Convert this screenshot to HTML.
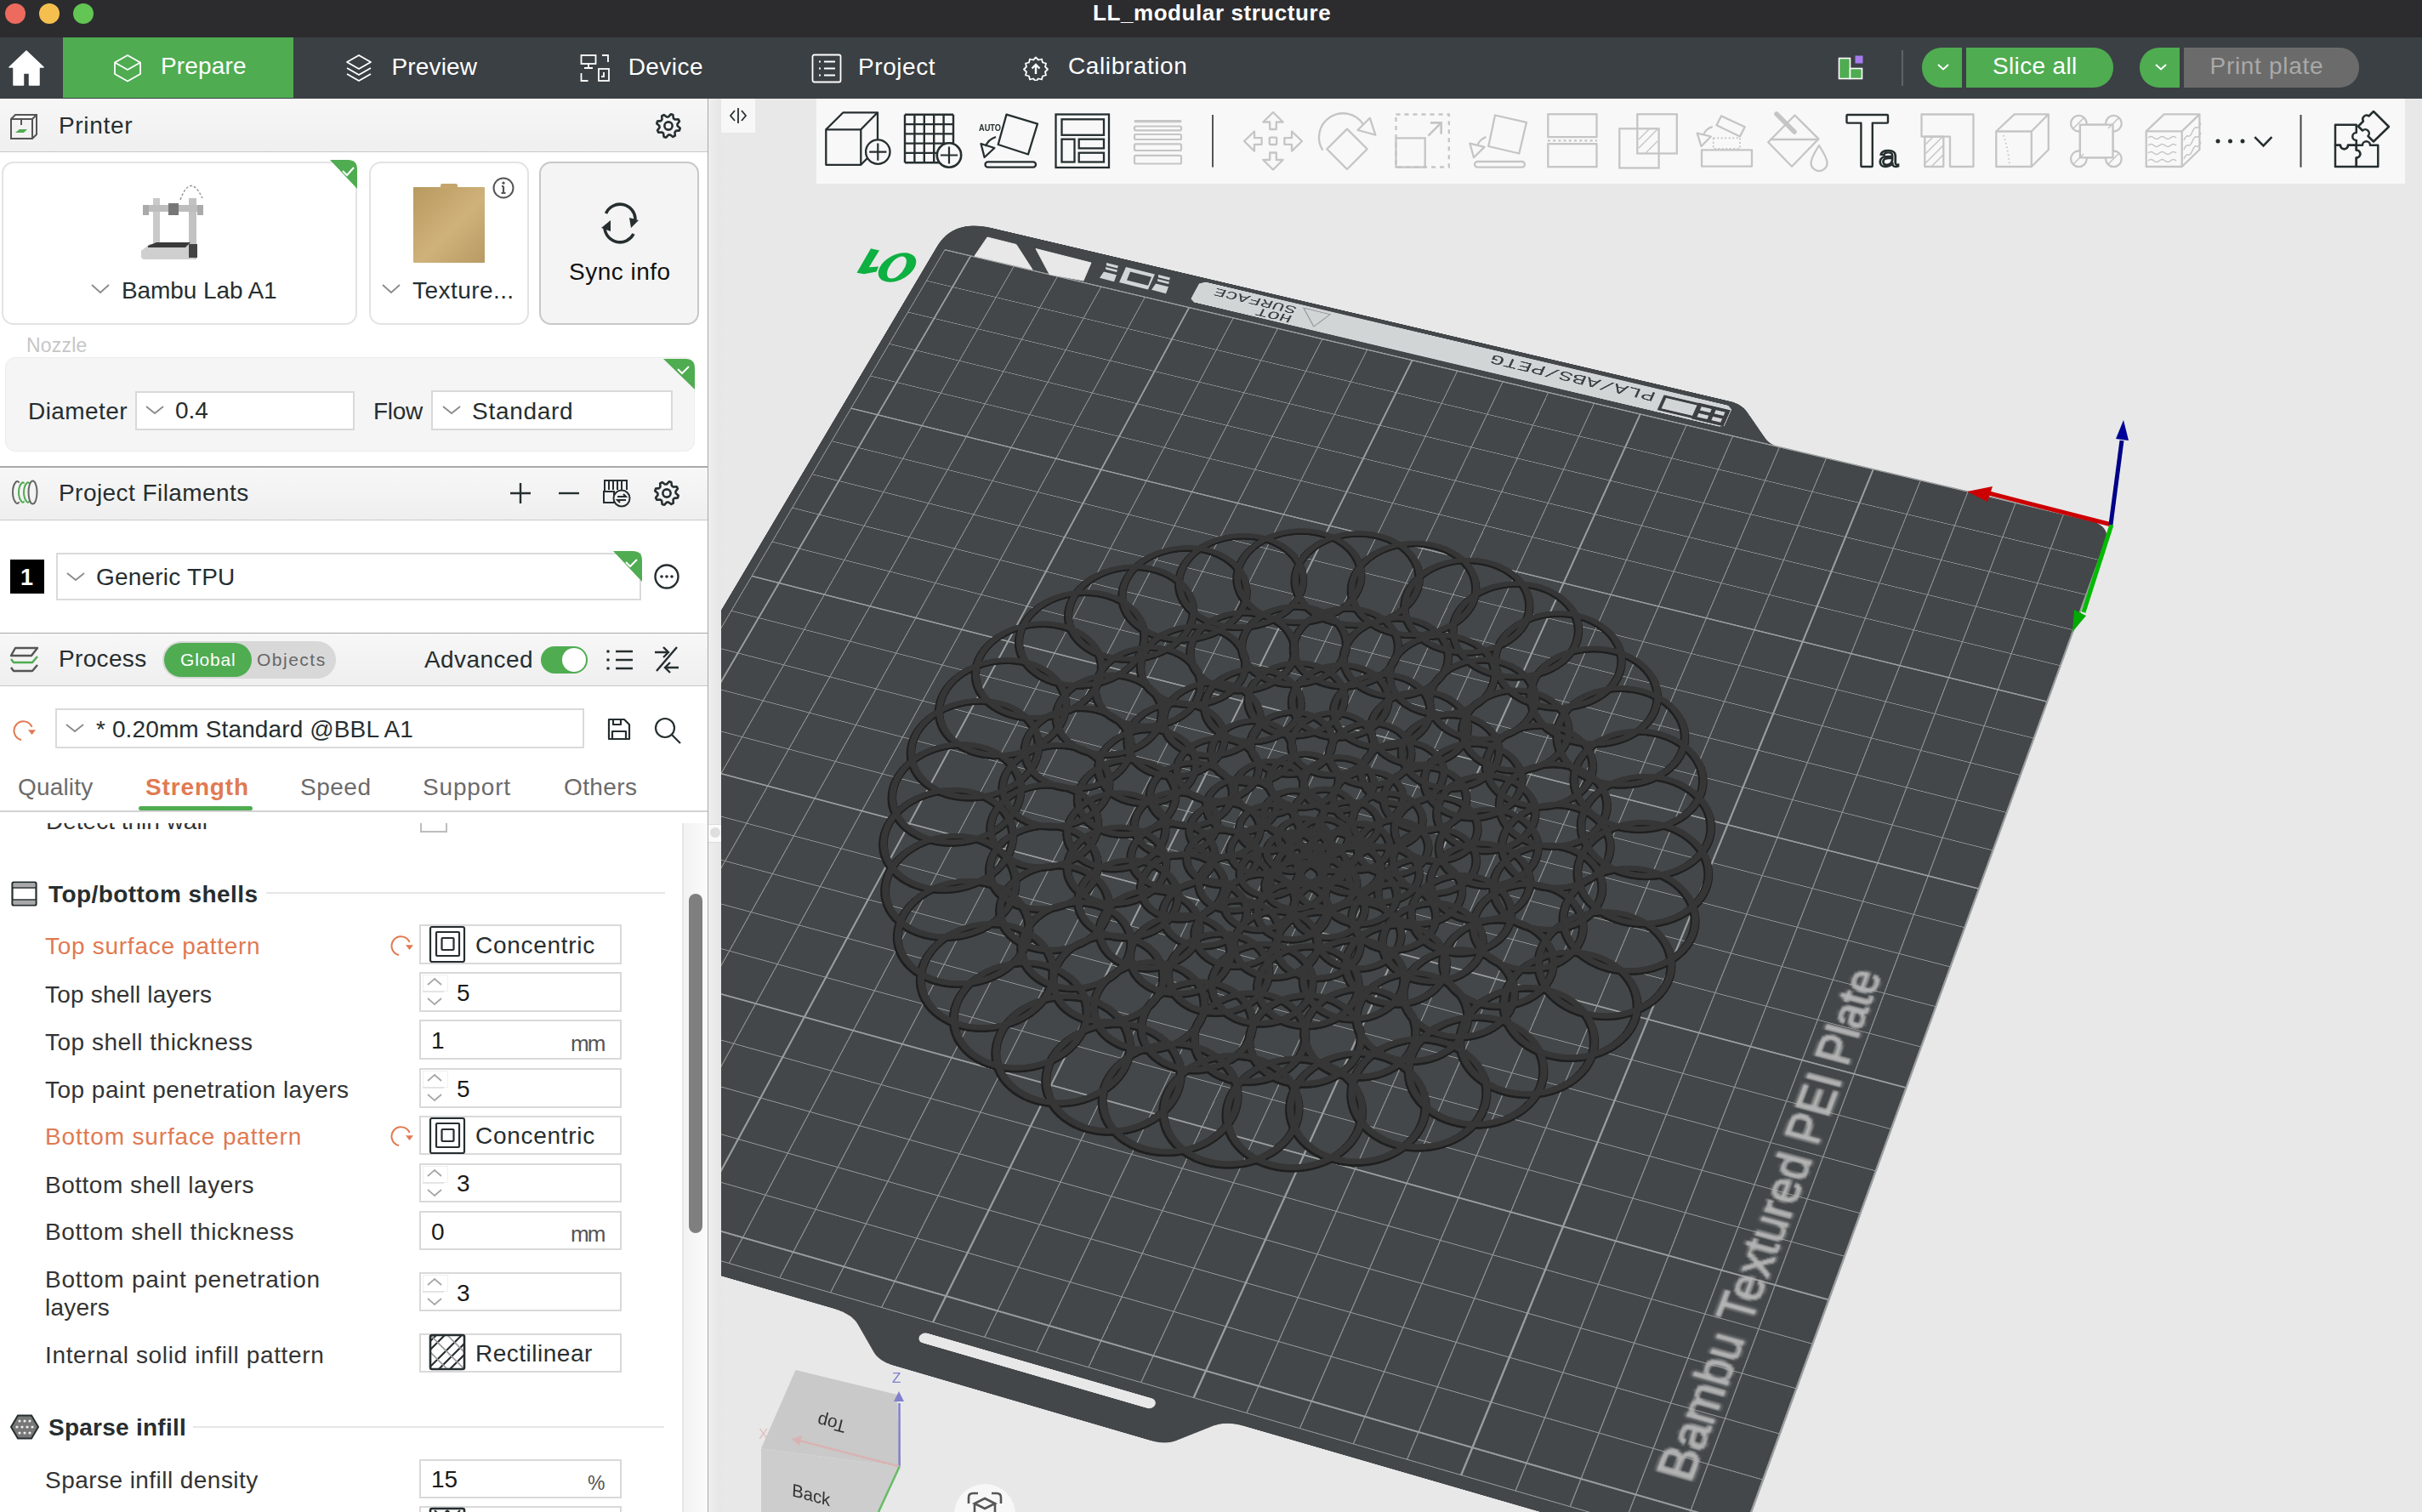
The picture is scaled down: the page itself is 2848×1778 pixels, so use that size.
<!DOCTYPE html>
<html><head><meta charset="utf-8"><title>Bambu Studio</title>
<style>
html,body{margin:0;padding:0}
body{width:2848px;height:1778px;overflow:hidden;position:relative;background:#e8e8e8;font-family:"Liberation Sans", sans-serif}
.t{position:absolute;white-space:nowrap;line-height:1}
.r{position:absolute}
</style></head><body>
<div class="r" style="left:0.0px;top:0.0px;width:2848.0px;height:44.0px;background:#2c2c2e"></div>
<div class="r" style="left:6.0px;top:4.0px;width:24.0px;height:24.0px;background:#ed6a5e;border-radius:50%"></div>
<div class="r" style="left:46.0px;top:4.0px;width:24.0px;height:24.0px;background:#f5bf4f;border-radius:50%"></div>
<div class="r" style="left:86.0px;top:4.0px;width:24.0px;height:24.0px;background:#62c554;border-radius:50%"></div>
<div id="t1" class="t" style="left:1285.0px;top:1.7px;font-size:26px;color:#ffffff;font-weight:bold;letter-spacing:0.579px;">LL_modular structure</div>
<div class="r" style="left:0.0px;top:44.0px;width:2848.0px;height:72.0px;background:#3b4044"></div>
<div class="r" style="left:74.0px;top:44.0px;width:271.0px;height:71.0px;background:#4fac51"></div>
<svg class="r" style="left:10.0px;top:58.0px" width="42.0" height="44.0" viewBox="0 0 42 44"><path d="M21 2 L41 21 H36 V42 H24.5 V28 H17.5 V42 H6 V21 H1 Z" fill="#fff" stroke="#fff" stroke-width="1.5" stroke-linejoin="round"/></svg>
<svg class="r" style="left:132.0px;top:62.0px" width="36.0" height="36.0" viewBox="0 0 36 36"><path d="M18 3 L33 11.5 V25 L18 33.5 L3 25 V11.5 Z M3 11.5 L18 20 L33 11.5 M18 20" fill="none" stroke="#fff" stroke-width="1.8" stroke-linejoin="round"/></svg>
<div id="t2" class="t" style="left:189.0px;top:64.1px;font-size:28px;color:#ffffff;font-weight:normal;letter-spacing:0.167px;">Prepare</div>
<svg class="r" style="left:404.0px;top:62.0px" width="36.0" height="36.0" viewBox="0 0 36 36"><g fill="none" stroke="#fff" stroke-width="1.8" stroke-linejoin="round"><path d="M18 3 L32 11 L18 19 L4 11 Z"/><path d="M4 18 L18 26 L32 18"/><path d="M4 25 L18 33 L32 25"/></g></svg>
<div id="t3" class="t" style="left:460.4px;top:64.6px;font-size:28px;color:#ffffff;font-weight:normal;letter-spacing:0.167px;">Preview</div>
<svg class="r" style="left:681.0px;top:62.0px" width="40.0" height="36.0" viewBox="0 0 40 36"><g fill="none" stroke="#fff" stroke-width="1.8"><rect x="2.5" y="3" width="17" height="10"/><path d="M11 13v5M6 18h10"/><path d="M27 3h7v8"/><path d="M2.5 24v9h8"/><rect x="23" y="19" width="12" height="14"/><path d="M29 23v5h-3"/></g></svg>
<div id="t4" class="t" style="left:738.7px;top:64.6px;font-size:28px;color:#ffffff;font-weight:normal;letter-spacing:0.440px;">Device</div>
<svg class="r" style="left:953.0px;top:62.0px" width="38.0" height="36.0" viewBox="0 0 38 36"><g fill="none" stroke="#fff" stroke-width="1.8"><rect x="2.5" y="2.5" width="33" height="32" rx="2"/><path d="M10 10.5h2M16 10.5h13M10 18.5h2M16 18.5h13M10 26.5h2M16 26.5h13"/></g></svg>
<div id="t5" class="t" style="left:1009.0px;top:64.6px;font-size:28px;color:#ffffff;font-weight:normal;letter-spacing:0.566px;">Project</div>
<svg class="r" style="left:1203.0px;top:65.0px" width="30.0" height="30.0" viewBox="0 0 30 30"><path d="M15 2.5 l3 3 4-1 1 4 4 1-1 4 3 3-3 3 1 4-4 1-1 4-4-1-3 3-3-3-4 1-1-4-4-1 1-4-3-3 3-3-1-4 4-1 1-4 4 1z" fill="none" stroke="#fff" stroke-width="1.8" stroke-linejoin="round"/><path d="M15 22V11M10.5 15.5L15 11l4.5 4.5" fill="none" stroke="#fff" stroke-width="2.4"/></svg>
<div id="t6" class="t" style="left:1256.0px;top:64.1px;font-size:28px;color:#ffffff;font-weight:normal;letter-spacing:0.600px;">Calibration</div>
<svg class="r" style="left:2160.0px;top:63.0px" width="34.0" height="32.0" viewBox="0 0 34 32"><rect x="2.5" y="5.5" width="13" height="24" fill="#4fac51" stroke="#fff" stroke-width="1.6"/><rect x="15.5" y="17.5" width="14" height="12" fill="#4fac51" stroke="#fff" stroke-width="1.6"/><rect x="21.5" y="2.5" width="9" height="9" fill="#a77cf0"/></svg>
<div class="r" style="left:2236.0px;top:59.0px;width:2.0px;height:42.0px;background:#5e6366"></div>
<div class="r" style="left:2260.0px;top:56.0px;width:47.0px;height:46.5px;background:#4fac51;border-radius:23px 0 0 23px"></div>
<div class="r" style="left:2312.0px;top:56.0px;width:172.5px;height:46.5px;background:#4fac51;border-radius:0 23px 23px 0"></div>
<svg class="r" style="left:2277.0px;top:74.0px" width="16.0" height="10.0" viewBox="0 0 16 10"><path d="M2 2 L8 7.5 L14 2" fill="none" stroke="#fff" stroke-width="2"/></svg>
<div id="t7" class="t" style="left:2343.0px;top:64.3px;font-size:28px;color:#ffffff;font-weight:normal;letter-spacing:0.352px;">Slice all</div>
<div class="r" style="left:2516.0px;top:56.0px;width:47.0px;height:46.5px;background:#4fac51;border-radius:23px 0 0 23px"></div>
<div class="r" style="left:2568.0px;top:56.0px;width:206.4px;height:46.5px;background:#6b6b6b;border-radius:0 23px 23px 0"></div>
<svg class="r" style="left:2533.0px;top:74.0px" width="16.0" height="10.0" viewBox="0 0 16 10"><path d="M2 2 L8 7.5 L14 2" fill="none" stroke="#fff" stroke-width="2"/></svg>
<div id="t8" class="t" style="left:2598.5px;top:64.3px;font-size:28px;color:#a9a9a9;font-weight:normal;letter-spacing:0.700px;">Print plate</div>
<div class="r" style="left:0.0px;top:116.0px;width:832.0px;height:1662.0px;background:#ffffff"></div>
<div class="r" style="left:832.0px;top:116.0px;width:1.0px;height:1662.0px;background:#a9a9a9"></div>
<div class="r" style="left:833.0px;top:116.0px;width:15.0px;height:1662.0px;background:linear-gradient(90deg,#eeeeee,#e6e6e6)"></div>
<div class="r" style="left:833.0px;top:969.0px;width:15.0px;height:20.0px;background:#fafafa;border-top:1px solid #dcdcdc;border-bottom:1px solid #dcdcdc"></div>
<div class="r" style="left:835.0px;top:973.0px;width:12.0px;height:12.0px;background:#dedede;border-radius:50%"></div>
<div class="r" style="left:0.0px;top:116.0px;width:832.0px;height:63.0px;background:linear-gradient(180deg,#f7f7f7,#efefef);border-bottom:1.5px solid #c9c9c9;box-sizing:border-box"></div>
<svg class="r" style="left:10.0px;top:132.0px" width="36.0" height="32.0" viewBox="0 0 36 32"><g fill="none" stroke="#555" stroke-width="2"><path d="M3 8 L8 3 H33 V26 L28 31 H3 Z"/><path d="M3 8 H28 V31 M28 8 L33 3"/><path d="M15 8 V15"/></g><path d="M8 24 L13 20 H22 L18 24 Z" fill="#4fac51"/></svg>
<div id="t9" class="t" style="left:69.0px;top:133.7px;font-size:28px;color:#262e30;font-weight:normal;letter-spacing:0.667px;">Printer</div>
<svg class="r" style="left:770.0px;top:132.0px" width="32.0" height="32.0" viewBox="0 0 32 32"><polygon points="29.73,18.73 28.93,21.36 24.85,21.91 23.52,23.52 23.78,27.64 21.36,28.93 18.08,26.44 16.00,26.64 13.27,29.73 10.64,28.93 10.09,24.85 8.48,23.52 4.36,23.78 3.07,21.36 5.56,18.08 5.36,16.00 2.27,13.27 3.07,10.64 7.15,10.09 8.48,8.48 8.22,4.36 10.64,3.07 13.92,5.56 16.00,5.36 18.73,2.27 21.36,3.07 21.91,7.15 23.52,8.48 27.64,8.22 28.93,10.64 26.44,13.92 26.64,16.00" fill="none" stroke="#262e30" stroke-width="2.6" stroke-linejoin="round"/><circle cx="16" cy="16" r="4.62" fill="none" stroke="#262e30" stroke-width="2.6"/></svg>
<div class="r" style="left:1.5px;top:189.5px;width:418.5px;height:192.5px;border:2px solid #e3e3e3;border-radius:14px;background:#fff;box-sizing:border-box"></div>
<svg class="r" style="left:386.0px;top:188.0px" width="35.0" height="34.0" viewBox="0 0 35 34"><path d="M2 0 H23 Q34 0 34 11 V34 Z" fill="#4fac51"/><path d="M17 13 L22 18 L30 9" fill="none" stroke="#fff" stroke-width="2"/></svg>
<svg class="r" style="left:160.0px;top:205.0px" width="90.0" height="105.0" viewBox="0 0 90 105"><g><path d="M52 30 Q64 -2 78 28" fill="none" stroke="#999" stroke-width="1.5" stroke-dasharray="3 2"/><rect x="20" y="28" width="8" height="72" fill="#c9c9c9"/><rect x="62" y="28" width="9" height="72" fill="#c2c2c2"/><rect x="14" y="36" width="64" height="8" fill="#bdbdbd"/><rect x="38" y="34" width="12" height="14" fill="#777"/><rect x="8" y="36" width="7" height="12" fill="#aaa"/><rect x="72" y="36" width="7" height="12" fill="#aaa"/><path d="M6 90 L16 82 H70 V96 Q70 100 66 100 H10 Q6 100 6 96 Z" fill="#cfcfcf"/><path d="M14 84 L24 80 H64 L58 86 H14 Z" fill="#3a3a3a"/><rect x="62" y="82" width="10" height="16" fill="#444"/></g></svg>
<svg class="r" style="left:106.0px;top:333.0px" width="26.0" height="14.0" viewBox="0 0 26 14"><path d="M2 2 L12 11 L22 2" fill="none" stroke="#8a8a8a" stroke-width="1.8"/></svg>
<div id="t10" class="t" style="left:143.0px;top:327.9px;font-size:28px;color:#262e30;font-weight:normal;letter-spacing:-0.091px;">Bambu Lab A1</div>
<div class="r" style="left:434.0px;top:190.0px;width:188.0px;height:192.0px;border:2px solid #e3e3e3;border-radius:14px;background:#fff;box-sizing:border-box"></div>
<div class="r" style="left:486.0px;top:220.0px;width:84.0px;height:89.0px;background:linear-gradient(135deg,#b89a60,#cfb27a 55%,#b89a64);border-radius:1px"></div>
<div class="r" style="left:518.0px;top:216.0px;width:20.0px;height:6.0px;background:#c4a66c;border-radius:2px 2px 0 0"></div>
<svg class="r" style="left:578.0px;top:207.0px" width="28.0" height="28.0" viewBox="0 0 28 28"><circle cx="14" cy="14" r="11.5" fill="none" stroke="#555" stroke-width="2"/><path d="M14 12 V20 M11.5 20 H16.5 M12 12 H14" stroke="#555" stroke-width="2.2" fill="none"/><circle cx="14" cy="8.2" r="1.6" fill="#555"/></svg>
<svg class="r" style="left:448.0px;top:333.0px" width="26.0" height="14.0" viewBox="0 0 26 14"><path d="M2 2 L12 11 L22 2" fill="none" stroke="#8a8a8a" stroke-width="1.8"/></svg>
<div id="t11" class="t" style="left:485.0px;top:327.9px;font-size:28px;color:#262e30;font-weight:normal;letter-spacing:0.444px;">Texture...</div>
<div class="r" style="left:633.6px;top:190.0px;width:188.4px;height:192.0px;border:2px solid #c8c8c8;border-radius:14px;background:#f4f4f4;box-sizing:border-box"></div>
<svg class="r" style="left:700.0px;top:234.0px" width="58.0" height="58.0" viewBox="0 0 58 58"><g fill="none" stroke="#262e30" stroke-width="3.6"><path d="M12.5 17 A18 18 0 0 1 47 24"/><path d="M45 41 A18 18 0 0 1 11 34"/></g><path d="M51 25 L42 34 L40 22 Z" fill="#262e30"/><path d="M7 34 L18 25 L18 38 Z" fill="#262e30"/></svg>
<div id="t12" class="t" style="left:669.0px;top:306.3px;font-size:28px;color:#111;font-weight:normal;letter-spacing:0.500px;">Sync info</div>
<div id="t13" class="t" style="left:31.0px;top:394.5px;font-size:23px;color:#c6c6c6;font-weight:normal;letter-spacing:0.200px;">Nozzle</div>
<div class="r" style="left:6.4px;top:420.0px;width:810.6px;height:111.0px;background:#f5f5f5;border:1.5px solid #ececec;border-radius:12px;box-sizing:border-box"></div>
<svg class="r" style="left:779.0px;top:421.0px" width="39.0" height="38.0" viewBox="0 0 39 38"><path d="M1 1 H27 Q38 1 38 12 V37 Z" fill="#4fac51"/><path d="M18 13 L23 18 L31 10" fill="none" stroke="#fff" stroke-width="2"/></svg>
<div id="t14" class="t" style="left:33.0px;top:469.9px;font-size:28px;color:#262e30;font-weight:normal;letter-spacing:0.429px;">Diameter</div>
<div class="r" style="left:159.0px;top:460.0px;width:257.5px;height:46.0px;background:#fff;border:2px solid #d9d9d9;box-sizing:border-box"></div>
<svg class="r" style="left:170.0px;top:476.0px" width="26.0" height="13.0" viewBox="0 0 26 13"><path d="M2 2 L12 10 L22 2" fill="none" stroke="#8a8a8a" stroke-width="1.8"/></svg>
<div id="t15" class="t" style="left:206.0px;top:469.3px;font-size:28px;color:#262e30;font-weight:normal;letter-spacing:0.000px;">0.4</div>
<div id="t16" class="t" style="left:439.0px;top:469.9px;font-size:28px;color:#262e30;font-weight:normal;letter-spacing:-0.333px;">Flow</div>
<div class="r" style="left:507.0px;top:459.0px;width:283.5px;height:47.0px;background:#fff;border:2px solid #d9d9d9;box-sizing:border-box"></div>
<svg class="r" style="left:519.0px;top:476.0px" width="26.0" height="13.0" viewBox="0 0 26 13"><path d="M2 2 L12 10 L22 2" fill="none" stroke="#8a8a8a" stroke-width="1.8"/></svg>
<div id="t17" class="t" style="left:555.0px;top:469.9px;font-size:28px;color:#262e30;font-weight:normal;letter-spacing:0.714px;">Standard</div>
<div class="r" style="left:0.0px;top:548.0px;width:832.0px;height:1.5px;background:#a9a9a9"></div>
<div class="r" style="left:0.0px;top:549.5px;width:832.0px;height:62.0px;background:linear-gradient(180deg,#f7f7f7,#efefef);border-bottom:1.5px solid #c9c9c9;box-sizing:border-box"></div>
<svg class="r" style="left:12.0px;top:562.0px" width="34.0" height="34.0" viewBox="0 0 34 34"><g fill="none" stroke-width="2" stroke-linecap="round"><path d="M10 5 Q8 3 6.5 5 Q3 9 3 17 Q3 25 6.5 29 Q8 31 10 29" stroke="#666"/><path d="M16 6 Q15 4.5 13.5 6 Q10 10 10 17 Q10 24 13.5 28 Q15 29.5 16 28" stroke="#4fac51"/><path d="M22 6 Q21 4.5 19.5 6 Q16 10 16 17 Q16 24 19.5 28 Q21 29.5 22 28" stroke="#4fac51"/><ellipse cx="26.5" cy="17" rx="5" ry="13.5" stroke="#666"/></g></svg>
<div id="t18" class="t" style="left:69.0px;top:566.3px;font-size:28px;color:#262e30;font-weight:normal;letter-spacing:0.438px;">Project Filaments</div>
<svg class="r" style="left:599.0px;top:567.0px" width="26.0" height="26.0" viewBox="0 0 26 26"><path d="M13 1V25M1 13H25" stroke="#262e30" stroke-width="2.4"/></svg>
<svg class="r" style="left:656.0px;top:567.0px" width="26.0" height="26.0" viewBox="0 0 26 26"><path d="M1 13H25" stroke="#262e30" stroke-width="2.4"/></svg>
<svg class="r" style="left:707.0px;top:562.0px" width="38.0" height="36.0" viewBox="0 0 38 36"><g fill="none" stroke="#262e30" stroke-width="2"><path d="M4 16 V3 H30 V14"/><path d="M9 4v10M14 4v10M19 4v10M24 4v10"/><path d="M3 16 H15 V29 H3 Z"/><circle cx="24" cy="24" r="9.5" fill="#f2f2f2"/><path d="M19 22h10l-3-3M29 26h-10l3 3"/></g></svg>
<svg class="r" style="left:768.0px;top:564.0px" width="32.0" height="32.0" viewBox="0 0 32 32"><polygon points="29.73,18.73 28.93,21.36 24.85,21.91 23.52,23.52 23.78,27.64 21.36,28.93 18.08,26.44 16.00,26.64 13.27,29.73 10.64,28.93 10.09,24.85 8.48,23.52 4.36,23.78 3.07,21.36 5.56,18.08 5.36,16.00 2.27,13.27 3.07,10.64 7.15,10.09 8.48,8.48 8.22,4.36 10.64,3.07 13.92,5.56 16.00,5.36 18.73,2.27 21.36,3.07 21.91,7.15 23.52,8.48 27.64,8.22 28.93,10.64 26.44,13.92 26.64,16.00" fill="none" stroke="#262e30" stroke-width="2.6" stroke-linejoin="round"/><circle cx="16" cy="16" r="4.62" fill="none" stroke="#262e30" stroke-width="2.6"/></svg>
<div class="r" style="left:12.0px;top:658.0px;width:40.0px;height:39.5px;background:#000"></div>
<div id="t19" class="t" style="left:24.0px;top:666.1px;font-size:27px;color:#fff;font-weight:bold;">1</div>
<div class="r" style="left:65.6px;top:650.0px;width:688.9px;height:56.0px;background:#fff;border:2px solid #dadada;box-sizing:border-box"></div>
<svg class="r" style="left:720.0px;top:647.0px" width="36.0" height="38.0" viewBox="0 0 36 38"><path d="M1 1 H24 Q35 1 35 12 V37 Z" fill="#4fac51"/><path d="M16 14 L21 19 L29 11" fill="none" stroke="#fff" stroke-width="2"/></svg>
<svg class="r" style="left:77.0px;top:672.0px" width="26.0" height="14.0" viewBox="0 0 26 14"><path d="M2 2 L12 10 L22 2" fill="none" stroke="#8a8a8a" stroke-width="1.8"/></svg>
<div id="t20" class="t" style="left:113.0px;top:665.3px;font-size:28px;color:#262e30;font-weight:normal;letter-spacing:0.200px;">Generic TPU</div>
<svg class="r" style="left:768.0px;top:662.0px" width="32.0" height="32.0" viewBox="0 0 32 32"><circle cx="16" cy="16" r="13.5" fill="none" stroke="#262e30" stroke-width="2.4"/><circle cx="10" cy="16" r="1.8" fill="#262e30"/><circle cx="16" cy="16" r="1.8" fill="#262e30"/><circle cx="22" cy="16" r="1.8" fill="#262e30"/></svg>
<div class="r" style="left:0.0px;top:743.5px;width:832.0px;height:1.5px;background:#a9a9a9"></div>
<div class="r" style="left:0.0px;top:745.0px;width:832.0px;height:62.0px;background:linear-gradient(180deg,#f7f7f7,#efefef);border-bottom:1.5px solid #c9c9c9;box-sizing:border-box"></div>
<svg class="r" style="left:10.0px;top:758.0px" width="38.0" height="36.0" viewBox="0 0 38 36"><g fill="none" stroke-width="2.4" stroke-linejoin="round"><path d="M8 4 H34 L27 13 H3 Z" stroke="#555"/><path d="M3 17 L6 21 H28 L34 14" stroke="#4fac51"/><path d="M3 27 L6 31 H28 L34 24" stroke="#555"/></g></svg>
<div id="t21" class="t" style="left:69.0px;top:761.3px;font-size:28px;color:#262e30;font-weight:normal;letter-spacing:0.333px;">Process</div>
<div class="r" style="left:191.0px;top:754.0px;width:204.0px;height:44.0px;background:#d8d8d8;border-radius:22px"></div>
<div class="r" style="left:192.6px;top:756.0px;width:103.4px;height:40.0px;background:#4fac51;border-radius:20px"></div>
<div id="t22" class="t" style="left:212.0px;top:765.2px;font-size:21px;color:#fff;font-weight:normal;letter-spacing:0.800px;">Global</div>
<div id="t23" class="t" style="left:302.0px;top:765.2px;font-size:21px;color:#666;font-weight:normal;letter-spacing:1.500px;">Objects</div>
<div id="t24" class="t" style="left:499.0px;top:762.3px;font-size:28px;color:#262e30;font-weight:normal;letter-spacing:0.429px;">Advanced</div>
<div class="r" style="left:636.0px;top:760.0px;width:55.0px;height:32.0px;background:#4fac51;border-radius:16px"></div>
<div class="r" style="left:661.0px;top:762.0px;width:28.0px;height:28.0px;background:#fff;border-radius:50%"></div>
<svg class="r" style="left:710.0px;top:760.0px" width="36.0" height="32.0" viewBox="0 0 36 32"><g stroke="#262e30" stroke-width="2.6" fill="none"><path d="M14 6H34M14 16H34M14 26H34"/></g><g fill="#262e30"><circle cx="5" cy="6" r="1.8"/><circle cx="5" cy="16" r="1.8"/><circle cx="5" cy="26" r="1.8"/></g></svg>
<svg class="r" style="left:766.0px;top:759.0px" width="36.0" height="34.0" viewBox="0 0 36 34"><g stroke="#262e30" stroke-width="2.4" fill="none"><path d="M30 2 L6 30"/><path d="M4 8 H20 M14 2 L20 8 L14 14"/><path d="M32 26 H16 M22 20 L16 26 L22 32"/></g></svg>
<svg class="r" style="left:14.0px;top:845.0px" width="30.0" height="28.0" viewBox="0 0 30 28"><path d="M11.1 25 A11 11 0 1 1 23.6 9.9" fill="none" stroke="#e07a52" stroke-width="2"/><path d="M19 13.2 L28 13.2 L23.5 19 Z" fill="#e07a52"/></svg>
<div class="r" style="left:65.0px;top:833.0px;width:622.0px;height:47.0px;background:#fff;border:2px solid #dadada;box-sizing:border-box"></div>
<svg class="r" style="left:76.0px;top:850.0px" width="26.0" height="12.0" viewBox="0 0 26 12"><path d="M2 2 L12 10 L22 2" fill="none" stroke="#8a8a8a" stroke-width="1.8"/></svg>
<div id="t25" class="t" style="left:113.0px;top:844.3px;font-size:28px;color:#262e30;font-weight:normal;letter-spacing:0.125px;">* 0.20mm Standard @BBL A1</div>
<svg class="r" style="left:714.0px;top:844.0px" width="28.0" height="27.0" viewBox="0 0 28 27"><g fill="none" stroke="#262e30" stroke-width="2.2" stroke-linejoin="round"><path d="M2 2 H20 L26 8 V25 H2 Z"/><path d="M7 2 V8 H16 V2"/><path d="M6 25 V16 H22 V25"/></g></svg>
<svg class="r" style="left:768.0px;top:842.0px" width="34.0" height="34.0" viewBox="0 0 34 34"><circle cx="14" cy="14" r="11" fill="none" stroke="#262e30" stroke-width="2.2"/><path d="M22 22 L32 32" stroke="#262e30" stroke-width="2.2"/></svg>
<div id="t26" class="t" style="left:21.0px;top:912.3px;font-size:28px;color:#6b6b6b;font-weight:normal;letter-spacing:0.167px;">Quality</div>
<div id="t27" class="t" style="left:171.0px;top:912.3px;font-size:28px;color:#e07a52;font-weight:bold;letter-spacing:0.857px;">Strength</div>
<div class="r" style="left:163.0px;top:948.0px;width:134.0px;height:4.5px;background:#4fac51;border-radius:3px"></div>
<div id="t28" class="t" style="left:353.0px;top:912.3px;font-size:28px;color:#6b6b6b;font-weight:normal;letter-spacing:0.500px;">Speed</div>
<div id="t29" class="t" style="left:497.0px;top:912.3px;font-size:28px;color:#6b6b6b;font-weight:normal;letter-spacing:0.833px;">Support</div>
<div id="t30" class="t" style="left:663.0px;top:912.3px;font-size:28px;color:#6b6b6b;font-weight:normal;letter-spacing:0.400px;">Others</div>
<div class="r" style="left:0.0px;top:953.0px;width:832.0px;height:2.0px;background:#d2d2d2"></div>
<div class="r" style="left:0;top:968px;width:832px;height:810px;overflow:hidden">
<div id="t31" class="t" style="left:54.0px;top:-16.2px;font-size:28px;color:#333;font-weight:normal;">Detect thin wall</div>
<div class="r" style="left:494.0px;top:-21.0px;width:32.0px;height:32.0px;border:2px solid #bdbdbd;box-sizing:border-box;background:#fff"></div>
</div>
<div class="r" style="left:802.0px;top:968.0px;width:30.0px;height:810.0px;background:linear-gradient(90deg,#f2f2f2,#fbfbfb);border-left:2px solid #e6e6e6;box-sizing:border-box"></div>
<div class="r" style="left:810.0px;top:1051.0px;width:16.0px;height:399.0px;background:#7f7f7f;border-radius:8px"></div>
<svg class="r" style="left:12.0px;top:1035.0px" width="33.0" height="32.0" viewBox="0 0 33 32"><rect x="2.5" y="2.5" width="28" height="27" rx="1.5" fill="#fff" stroke="#262e30" stroke-width="2.2"/><rect x="4" y="4" width="25" height="4.5" fill="#a9a9a9"/><rect x="4" y="23.5" width="25" height="4.5" fill="#a9a9a9"/><path d="M3 9H30M3 23H30" stroke="#262e30" stroke-width="1.6"/></svg>
<div id="t32" class="t" style="left:57.0px;top:1038.3px;font-size:28px;color:#262e30;font-weight:bold;letter-spacing:0.438px;">Top/bottom shells</div>
<div class="r" style="left:313.0px;top:1049.0px;width:468.6px;height:2.0px;background:#e6e6e6"></div>
<div id="t33" class="t" style="left:53.0px;top:1099.3px;font-size:28px;color:#e07a52;font-weight:normal;letter-spacing:0.722px;">Top surface pattern</div>
<svg class="r" style="left:458.0px;top:1098.0px" width="30.0" height="28.0" viewBox="0 0 30 28"><path d="M11.1 25 A11 11 0 1 1 23.6 9.9" fill="none" stroke="#e07a52" stroke-width="2"/><path d="M19 13.2 L28 13.2 L23.5 19 Z" fill="#e07a52"/></svg>
<div class="r" style="left:493.0px;top:1087.0px;width:238.0px;height:47.0px;background:#fff;border:2px solid #d9d9d9;box-sizing:border-box"></div>
<svg class="r" style="left:504.0px;top:1088.0px" width="44.0" height="44.0" viewBox="0 0 44 44"><g fill="none" stroke="#262e30" stroke-width="2.2"><rect x="2" y="2" width="40" height="41" rx="2"/><rect x="9" y="8" width="27" height="28" rx="1"/><rect x="15.5" y="15" width="14" height="14" rx="1"/></g></svg>
<div id="t34" class="t" style="left:559.0px;top:1098.3px;font-size:28px;color:#262e30;font-weight:normal;letter-spacing:0.712px;">Concentric</div>
<div id="t35" class="t" style="left:53.0px;top:1155.9px;font-size:28px;color:#333333;font-weight:normal;letter-spacing:0.200px;">Top shell layers</div>
<div class="r" style="left:493.0px;top:1143.0px;width:238.0px;height:47.0px;background:#fff;border:2px solid #d9d9d9;box-sizing:border-box"></div>
<div class="r" style="left:497.0px;top:1146.0px;width:28.0px;height:18.0px;background:#fff;border:1px solid #f0f0f0"></div>
<svg class="r" style="left:500.0px;top:1149.0px" width="22.0" height="10.0" viewBox="0 0 22 10"><path d="M3 9 L11 2 L19 9" fill="none" stroke="#a6a6a6" stroke-width="1.8"/></svg>
<div class="r" style="left:497.0px;top:1165.0px;width:25.0px;height:2.0px;background:#e4e4e4"></div>
<svg class="r" style="left:500.0px;top:1173.0px" width="22.0" height="10.0" viewBox="0 0 22 10"><path d="M3 1 L11 8 L19 1" fill="none" stroke="#a6a6a6" stroke-width="1.8"/></svg>
<div id="t36" class="t" style="left:537.0px;top:1153.8px;font-size:28px;color:#1a1a1a;font-weight:normal;">5</div>
<div id="t37" class="t" style="left:53.0px;top:1211.8px;font-size:28px;color:#333333;font-weight:normal;letter-spacing:0.500px;">Top shell thickness</div>
<div class="r" style="left:493.0px;top:1199.0px;width:238.0px;height:47.0px;background:#fff;border:2px solid #d9d9d9;box-sizing:border-box"></div>
<div id="t38" class="t" style="left:507.0px;top:1210.3px;font-size:28px;color:#1a1a1a;font-weight:normal;">1</div>
<div id="t39" class="t" style="left:671.0px;top:1213.5px;font-size:26px;color:#555;font-weight:normal;letter-spacing:-2.000px;">mm</div>
<div id="t40" class="t" style="left:53.0px;top:1268.3px;font-size:28px;color:#333333;font-weight:normal;letter-spacing:0.481px;">Top paint penetration layers</div>
<div class="r" style="left:493.0px;top:1256.0px;width:238.0px;height:47.0px;background:#fff;border:2px solid #d9d9d9;box-sizing:border-box"></div>
<div class="r" style="left:497.0px;top:1259.0px;width:28.0px;height:18.0px;background:#fff;border:1px solid #f0f0f0"></div>
<svg class="r" style="left:500.0px;top:1262.0px" width="22.0" height="10.0" viewBox="0 0 22 10"><path d="M3 9 L11 2 L19 9" fill="none" stroke="#a6a6a6" stroke-width="1.8"/></svg>
<div class="r" style="left:497.0px;top:1278.0px;width:25.0px;height:2.0px;background:#e4e4e4"></div>
<svg class="r" style="left:500.0px;top:1286.0px" width="22.0" height="10.0" viewBox="0 0 22 10"><path d="M3 1 L11 8 L19 1" fill="none" stroke="#a6a6a6" stroke-width="1.8"/></svg>
<div id="t41" class="t" style="left:537.0px;top:1266.8px;font-size:28px;color:#1a1a1a;font-weight:normal;">5</div>
<div id="t42" class="t" style="left:53.0px;top:1323.3px;font-size:28px;color:#e07a52;font-weight:normal;letter-spacing:0.857px;">Bottom surface pattern</div>
<svg class="r" style="left:458.0px;top:1322.0px" width="30.0" height="28.0" viewBox="0 0 30 28"><path d="M11.1 25 A11 11 0 1 1 23.6 9.9" fill="none" stroke="#e07a52" stroke-width="2"/><path d="M19 13.2 L28 13.2 L23.5 19 Z" fill="#e07a52"/></svg>
<div class="r" style="left:493.0px;top:1312.0px;width:238.0px;height:46.4px;background:#fff;border:2px solid #d9d9d9;box-sizing:border-box"></div>
<svg class="r" style="left:504.0px;top:1313.0px" width="44.0" height="44.0" viewBox="0 0 44 44"><g fill="none" stroke="#262e30" stroke-width="2.2"><rect x="2" y="2" width="40" height="41" rx="2"/><rect x="9" y="8" width="27" height="28" rx="1"/><rect x="15.5" y="15" width="14" height="14" rx="1"/></g></svg>
<div id="t43" class="t" style="left:559.0px;top:1322.3px;font-size:28px;color:#262e30;font-weight:normal;letter-spacing:0.712px;">Concentric</div>
<div id="t44" class="t" style="left:53.0px;top:1379.9px;font-size:28px;color:#333333;font-weight:normal;letter-spacing:0.500px;">Bottom shell layers</div>
<div class="r" style="left:493.0px;top:1367.5px;width:238.0px;height:46.5px;background:#fff;border:2px solid #d9d9d9;box-sizing:border-box"></div>
<div class="r" style="left:497.0px;top:1370.5px;width:28.0px;height:18.0px;background:#fff;border:1px solid #f0f0f0"></div>
<svg class="r" style="left:500.0px;top:1373.5px" width="22.0" height="10.0" viewBox="0 0 22 10"><path d="M3 9 L11 2 L19 9" fill="none" stroke="#a6a6a6" stroke-width="1.8"/></svg>
<div class="r" style="left:497.0px;top:1389.5px;width:25.0px;height:2.0px;background:#e4e4e4"></div>
<svg class="r" style="left:500.0px;top:1397.5px" width="22.0" height="10.0" viewBox="0 0 22 10"><path d="M3 1 L11 8 L19 1" fill="none" stroke="#a6a6a6" stroke-width="1.8"/></svg>
<div id="t45" class="t" style="left:537.0px;top:1378.3px;font-size:28px;color:#1a1a1a;font-weight:normal;">3</div>
<div id="t46" class="t" style="left:53.0px;top:1435.3px;font-size:28px;color:#333333;font-weight:normal;letter-spacing:0.667px;">Bottom shell thickness</div>
<div class="r" style="left:493.0px;top:1423.6px;width:238.0px;height:46.9px;background:#fff;border:2px solid #d9d9d9;box-sizing:border-box"></div>
<div id="t47" class="t" style="left:507.0px;top:1434.9px;font-size:28px;color:#1a1a1a;font-weight:normal;">0</div>
<div id="t48" class="t" style="left:671.0px;top:1438.1px;font-size:26px;color:#555;font-weight:normal;letter-spacing:-2.000px;">mm</div>
<div id="t49" class="t" style="left:53.0px;top:1491.3px;font-size:28px;color:#333333;font-weight:normal;letter-spacing:0.783px;">Bottom paint penetration</div>
<div id="t50" class="t" style="left:53.0px;top:1524.3px;font-size:28px;color:#333333;font-weight:normal;letter-spacing:0.200px;">layers</div>
<div class="r" style="left:493.0px;top:1496.0px;width:238.0px;height:46.0px;background:#fff;border:2px solid #d9d9d9;box-sizing:border-box"></div>
<div class="r" style="left:497.0px;top:1499.0px;width:28.0px;height:18.0px;background:#fff;border:1px solid #f0f0f0"></div>
<svg class="r" style="left:500.0px;top:1502.0px" width="22.0" height="10.0" viewBox="0 0 22 10"><path d="M3 9 L11 2 L19 9" fill="none" stroke="#a6a6a6" stroke-width="1.8"/></svg>
<div class="r" style="left:497.0px;top:1518.0px;width:25.0px;height:2.0px;background:#e4e4e4"></div>
<svg class="r" style="left:500.0px;top:1526.0px" width="22.0" height="10.0" viewBox="0 0 22 10"><path d="M3 1 L11 8 L19 1" fill="none" stroke="#a6a6a6" stroke-width="1.8"/></svg>
<div id="t51" class="t" style="left:537.0px;top:1506.8px;font-size:28px;color:#1a1a1a;font-weight:normal;">3</div>
<div id="t52" class="t" style="left:53.0px;top:1580.3px;font-size:28px;color:#333333;font-weight:normal;letter-spacing:0.643px;">Internal solid infill pattern</div>
<div class="r" style="left:493.0px;top:1567.5px;width:238.0px;height:46.5px;background:#fff;border:2px solid #d9d9d9;box-sizing:border-box"></div>
<svg class="r" style="left:503.0px;top:1567.0px" width="46.0" height="46.0" viewBox="0 0 46 46"><defs><clipPath id="rc"><rect x="3" y="3" width="40" height="40" rx="2"/></clipPath></defs><g clip-path="url(#rc)" stroke-width="2.2"><path d="M-10 13L13 -10M-10 33L33 -10M0 43L43 0M13 56L56 13" stroke="#262e30"/><path d="M-10 23L23 -10M-10 3L3 -10M10 46L46 10M30 56L56 30" stroke="#262e30"/><path d="M3 3L43 43M3 23L23 43M23 3L43 23" stroke="#9a9a9a" stroke-width="1.6"/></g><rect x="3" y="3" width="40" height="40" rx="2" fill="none" stroke="#262e30" stroke-width="2.6"/></svg>
<div id="t53" class="t" style="left:559.0px;top:1578.0px;font-size:28px;color:#262e30;font-weight:normal;letter-spacing:0.500px;">Rectilinear</div>
<svg class="r" style="left:11.0px;top:1662.0px" width="36.0" height="32.0" viewBox="0 0 36 32"><path d="M10 2.5 H26 L34 16 L26 29.5 H10 L2 16 Z" fill="#777" stroke="#262e30" stroke-width="2"/><g fill="#eee"><circle cx="12" cy="9" r="1.6"/><circle cx="18" cy="9" r="1.6"/><circle cx="24" cy="9" r="1.6"/><circle cx="9" cy="16" r="1.6"/><circle cx="15" cy="16" r="1.6"/><circle cx="21" cy="16" r="1.6"/><circle cx="27" cy="16" r="1.6"/><circle cx="12" cy="23" r="1.6"/><circle cx="18" cy="23" r="1.6"/><circle cx="24" cy="23" r="1.6"/></g></svg>
<div id="t54" class="t" style="left:57.0px;top:1665.3px;font-size:28px;color:#262e30;font-weight:bold;letter-spacing:0.250px;">Sparse infill</div>
<div class="r" style="left:227.0px;top:1676.5px;width:554.0px;height:2.0px;background:#e6e6e6"></div>
<div id="t55" class="t" style="left:53.0px;top:1727.3px;font-size:28px;color:#333333;font-weight:normal;letter-spacing:0.450px;">Sparse infill density</div>
<div class="r" style="left:493.0px;top:1715.5px;width:238.0px;height:46.5px;background:#fff;border:2px solid #d9d9d9;box-sizing:border-box"></div>
<div id="t56" class="t" style="left:507.0px;top:1726.3px;font-size:28px;color:#1a1a1a;font-weight:normal;">15</div>
<div id="t57" class="t" style="left:691.0px;top:1732.5px;font-size:23px;color:#555;font-weight:normal;">%</div>
<div class="r" style="left:493.0px;top:1771.0px;width:238.0px;height:29.0px;background:#fff;border:2px solid #d9d9d9;box-sizing:border-box"></div>
<svg class="r" style="left:503.0px;top:1772.0px" width="46.0" height="18.0" viewBox="0 0 46 18"><path d="M3 16 V4 Q3 2 5 2 H41 Q43 2 43 4 V16" fill="none" stroke="#262e30" stroke-width="2.6"/><path d="M8 4 L20 16 M38 4 L26 16 M23 4 L16 12 M23 4 L30 12" stroke="#262e30" stroke-width="2"/></svg>
<div class="r" style="left:848px;top:116px;width:2000px;height:1662px;overflow:hidden;background:#e8e8e8">
<div style="position:absolute;left:0;top:0;width:3000px;height:3000px;transform-origin:0 0;transform:matrix3d(-0.5262762464,-0.1218219147,0,2.228024644e-05,-0.2403232349,0.3704414097,0,-5.774659021e-05,0,0,1,0,1776.722402,448.7152802,0,1)"><svg width="3000" height="3000" viewBox="-20 -20 300 300" style="display:block;overflow:visible"><path d="M0 5Q0 0 5 0L70 0Q72 0 73.5 -1.5L79.5 -7.8Q81.3 -9.4 83.5 -9.4L249 -9.4Q258 -9.4 258 -0.4L258 259L168 259Q164.5 259 162.5 260.8L157.5 265.3Q155.8 266.8 153 266.8L104 266.8Q101.3 266.8 99.8 265.5L94.6 260.4Q92.8 258.7 89.5 258.7L0 258.7Z" fill="#434749"/><polygon points="82.5,-2.2 82.5,-7.2 83.5,-8.1 199.5,-8.3 200.6,-7.4 200.6,-2.6 199.6,-1.8 83.5,-1.7" fill="#d2d5d6"/><path d="M10 0V256M20 0V256M30 0V256M40 0V256M60 0V256M70 0V256M80 0V256M90 0V256M110 0V256M120 0V256M130 0V256M140 0V256M160 0V256M170 0V256M180 0V256M190 0V256M210 0V256M220 0V256M230 0V256M240 0V256M256 0V256M0 10H256M0 20H256M0 30H256M0 40H256M0 60H256M0 70H256M0 80H256M0 90H256M0 110H256M0 120H256M0 130H256M0 140H256M0 160H256M0 170H256M0 180H256M0 190H256M0 210H256M0 220H256M0 230H256M0 240H256M0 256H256" stroke="#8a8e8e" stroke-width="0.21" fill="none"/><path d="M0 0V256M50 0V256M100 0V256M150 0V256M200 0V256M250 0V256M0 0H256M0 50H256M0 100H256M0 150H256M0 200H256M0 250H256" stroke="#9a9e9e" stroke-width="0.36" fill="none"/><path d="M107 259.6H150" stroke="#e8e8e8" stroke-width="2.2" stroke-linecap="round"/><defs><g id="dly" fill="none"><circle cx="195.3" cy="128.5" r="12.5"/><circle cx="194.28" cy="140.19" r="12.5"/><circle cx="191.24" cy="151.52" r="12.5"/><circle cx="186.28" cy="162.15" r="12.5"/><circle cx="179.55" cy="171.76" r="12.5"/><circle cx="171.26" cy="180.05" r="12.5"/><circle cx="161.65" cy="186.78" r="12.5"/><circle cx="151.02" cy="191.74" r="12.5"/><circle cx="139.69" cy="194.78" r="12.5"/><circle cx="128" cy="195.8" r="12.5"/><circle cx="116.31" cy="194.78" r="12.5"/><circle cx="104.98" cy="191.74" r="12.5"/><circle cx="94.35" cy="186.78" r="12.5"/><circle cx="84.74" cy="180.05" r="12.5"/><circle cx="76.45" cy="171.76" r="12.5"/><circle cx="69.72" cy="162.15" r="12.5"/><circle cx="64.76" cy="151.52" r="12.5"/><circle cx="61.72" cy="140.19" r="12.5"/><circle cx="60.7" cy="128.5" r="12.5"/><circle cx="61.72" cy="116.81" r="12.5"/><circle cx="64.76" cy="105.48" r="12.5"/><circle cx="69.72" cy="94.85" r="12.5"/><circle cx="76.45" cy="85.24" r="12.5"/><circle cx="84.74" cy="76.95" r="12.5"/><circle cx="94.35" cy="70.22" r="12.5"/><circle cx="104.98" cy="65.26" r="12.5"/><circle cx="116.31" cy="62.22" r="12.5"/><circle cx="128" cy="61.2" r="12.5"/><circle cx="139.69" cy="62.22" r="12.5"/><circle cx="151.02" cy="65.26" r="12.5"/><circle cx="161.65" cy="70.22" r="12.5"/><circle cx="171.26" cy="76.95" r="12.5"/><circle cx="179.55" cy="85.24" r="12.5"/><circle cx="186.28" cy="94.85" r="12.5"/><circle cx="191.24" cy="105.48" r="12.5"/><circle cx="194.28" cy="116.81" r="12.5"/><circle cx="176.65" cy="132.19" r="10.4"/><circle cx="174.93" cy="142.39" r="10.4"/><circle cx="171.12" cy="152.02" r="10.4"/><circle cx="165.39" cy="160.64" r="10.4"/><circle cx="158" cy="167.88" r="10.4"/><circle cx="149.26" cy="173.42" r="10.4"/><circle cx="139.56" cy="177.03" r="10.4"/><circle cx="129.32" cy="178.54" r="10.4"/><circle cx="118.99" cy="177.89" r="10.4"/><circle cx="109.03" cy="175.11" r="10.4"/><circle cx="99.86" cy="170.31" r="10.4"/><circle cx="91.88" cy="163.72" r="10.4"/><circle cx="85.46" cy="155.61" r="10.4"/><circle cx="80.85" cy="146.34" r="10.4"/><circle cx="78.28" cy="136.31" r="10.4"/><circle cx="77.85" cy="125.98" r="10.4"/><circle cx="79.57" cy="115.77" r="10.4"/><circle cx="83.38" cy="106.15" r="10.4"/><circle cx="89.11" cy="97.53" r="10.4"/><circle cx="96.5" cy="90.29" r="10.4"/><circle cx="105.24" cy="84.75" r="10.4"/><circle cx="114.94" cy="81.14" r="10.4"/><circle cx="125.18" cy="79.63" r="10.4"/><circle cx="135.51" cy="80.28" r="10.4"/><circle cx="145.47" cy="83.06" r="10.4"/><circle cx="154.64" cy="87.85" r="10.4"/><circle cx="162.62" cy="94.45" r="10.4"/><circle cx="169.04" cy="102.56" r="10.4"/><circle cx="173.65" cy="111.83" r="10.4"/><circle cx="176.22" cy="121.85" r="10.4"/><circle cx="162.49" cy="130.54" r="9.5"/><circle cx="161.24" cy="139.12" r="9.5"/><circle cx="157.96" cy="147.16" r="9.5"/><circle cx="152.86" cy="154.18" r="9.5"/><circle cx="146.23" cy="159.78" r="9.5"/><circle cx="138.45" cy="163.63" r="9.5"/><circle cx="129.97" cy="165.5" r="9.5"/><circle cx="121.3" cy="165.29" r="9.5"/><circle cx="112.92" cy="163.01" r="9.5"/><circle cx="105.34" cy="158.79" r="9.5"/><circle cx="98.98" cy="152.88" r="9.5"/><circle cx="94.23" cy="145.62" r="9.5"/><circle cx="91.35" cy="137.43" r="9.5"/><circle cx="90.51" cy="128.8" r="9.5"/><circle cx="91.76" cy="120.21" r="9.5"/><circle cx="95.04" cy="112.17" r="9.5"/><circle cx="100.14" cy="105.15" r="9.5"/><circle cx="106.77" cy="99.55" r="9.5"/><circle cx="114.55" cy="95.71" r="9.5"/><circle cx="123.03" cy="93.83" r="9.5"/><circle cx="131.7" cy="94.04" r="9.5"/><circle cx="140.08" cy="96.32" r="9.5"/><circle cx="147.66" cy="100.54" r="9.5"/><circle cx="154.02" cy="106.45" r="9.5"/><circle cx="158.77" cy="113.71" r="9.5"/><circle cx="161.65" cy="121.9" r="9.5"/><circle cx="151" cy="133.84" r="8"/><circle cx="148.65" cy="141.47" r="8"/><circle cx="144.06" cy="148" r="8"/><circle cx="137.68" cy="152.79" r="8"/><circle cx="130.13" cy="155.37" r="8"/><circle cx="122.16" cy="155.5" r="8"/><circle cx="114.53" cy="153.15" r="8"/><circle cx="108" cy="148.56" r="8"/><circle cx="103.21" cy="142.18" r="8"/><circle cx="100.63" cy="134.63" r="8"/><circle cx="100.5" cy="126.66" r="8"/><circle cx="102.85" cy="119.03" r="8"/><circle cx="107.44" cy="112.5" r="8"/><circle cx="113.82" cy="107.71" r="8"/><circle cx="121.37" cy="105.13" r="8"/><circle cx="129.34" cy="105" r="8"/><circle cx="136.97" cy="107.35" r="8"/><circle cx="143.5" cy="111.94" r="8"/><circle cx="148.29" cy="118.32" r="8"/><circle cx="150.87" cy="125.87" r="8"/><circle cx="141.44" cy="132.21" r="6.8"/><circle cx="139.46" cy="138.78" r="6.8"/><circle cx="134.98" cy="143.98" r="6.8"/><circle cx="128.77" cy="146.9" r="6.8"/><circle cx="121.91" cy="147.04" r="6.8"/><circle cx="115.58" cy="144.38" r="6.8"/><circle cx="110.89" cy="139.38" r="6.8"/><circle cx="108.63" cy="132.9" r="6.8"/><circle cx="109.2" cy="126.06" r="6.8"/><circle cx="112.51" cy="120.05" r="6.8"/><circle cx="117.97" cy="115.9" r="6.8"/><circle cx="124.65" cy="114.34" r="6.8"/><circle cx="131.39" cy="115.62" r="6.8"/><circle cx="137.03" cy="119.54" r="6.8"/><circle cx="140.58" cy="125.41" r="6.8"/><circle cx="133.08" cy="134.91" r="5.8"/><circle cx="129.34" cy="139.44" r="5.8"/><circle cx="123.65" cy="140.9" r="5.8"/><circle cx="118.19" cy="138.74" r="5.8"/><circle cx="115.05" cy="133.78" r="5.8"/><circle cx="115.42" cy="127.92" r="5.8"/><circle cx="119.16" cy="123.4" r="5.8"/><circle cx="124.85" cy="121.94" r="5.8"/><circle cx="130.31" cy="124.1" r="5.8"/><circle cx="133.45" cy="129.05" r="5.8"/><circle cx="127.3" cy="133.24" r="4.8"/><circle cx="124.33" cy="135.91" r="4.8"/><circle cx="120.53" cy="134.68" r="4.8"/><circle cx="119.7" cy="130.76" r="4.8"/><circle cx="122.67" cy="128.09" r="4.8"/><circle cx="126.47" cy="129.32" r="4.8"/></g></defs><use href="#dly" stroke="#1f1f1f" stroke-width="1.75"/><use href="#dly" stroke="#363636" stroke-width="1.3" transform="translate(0,-0.3)"/><text transform="matrix(0 -1 -1 0 11.6 244.8)" font-family="Liberation Sans" font-size="9.6" fill="#b4b4b4" stroke="#b4b4b4" stroke-width="0.3" textLength="119" lengthAdjust="spacingAndGlyphs">Bambu Textured PEI Plate</text><text transform="matrix(1 0 0 -1 98.6 -6.9)" font-family="Liberation Mono" font-size="3.9" fill="#3c3f41" textLength="36" lengthAdjust="spacingAndGlyphs">PLA/ABS/PETG</text><text transform="matrix(1 0 0 -1 178.2 -7.3)" font-family="Liberation Mono" font-size="3.3" fill="#3c3f41" textLength="18.5" lengthAdjust="spacingAndGlyphs">SURFACE</text><text transform="matrix(1 0 0 -1 178.2 -4.5)" font-family="Liberation Mono" font-size="3.3" fill="#3c3f41" textLength="8" lengthAdjust="spacingAndGlyphs">HOT</text><polygon points="171,-7.4 177,-7.5 173,-2.9" fill="none" stroke="#9a9d9e" stroke-width="0.25"/><rect x="89.3" y="-6.5" width="7.4" height="3.9" fill="none" stroke="#3c3f41" stroke-width="0.7"/><path d="M83.1 -6.5h6v4h-6zM86 -6.5v4M83.1 -4.5h6" fill="none" stroke="#3c3f41" stroke-width="0.9"/></svg></div><svg width="2000" height="1662" style="position:absolute;left:0;top:0"><polygon points="313,163 347,171.5 366,201 298,185" fill="#e8e8e8" stroke="#e8e8e8" stroke-width="1" stroke-linejoin="round"/><polygon points="370,176.5 435,193 426,214 386,206.5" fill="#e8e8e8" stroke="#e8e8e8" stroke-width="1" stroke-linejoin="round"/><g fill="#d2d5d6" transform="translate(-848 -116)"><path d="M1301 309l14 3.5-1 3-13-3.2zM1300 314l14 3.5-0.8 2.6-13-3.3zM1298 319.5l15 3.8-3 8-17-4.5z"/><path d="M1324 314l34 8.5-8 18-34-8.5z M1329 319.5l-4 10 25 6.3 4-10z" fill-rule="evenodd"/><path d="M1362 323l14 3.5-1 3-13-3.2zM1361 328l14 3.5-0.8 2.6-13-3.3zM1359 333.5l15 3.8-3 8-17-4.5z"/></g><g fill="#0db041"><polygon points="176,176.3 186,178.5 173.8,198.3 185.2,197.5 182.5,203.5 168,206.2 159.5,204.8"/><path fill-rule="evenodd" d="M207 198.5 m-20.5 0 a20.5 12.5 -28 1 0 41 0 a20.5 12.5 -28 1 0 -41 0z M206.5 198.5 m-9.5 0 a9.5 5 -52 1 0 19 0 a9.5 5 -52 1 0 -19 0z"/></g><path d="M1635,501 L1487,463" stroke="#cc0000" stroke-width="5"/><polygon points="1465,462 1495,456 1489,474" fill="#cc0000"/><path d="M1635,501 L1602,604" stroke="#00bb00" stroke-width="5"/><polygon points="1589,627 1591,601 1605,608" fill="#00aa00"/><path d="M1634,501 L1647,402" stroke="#000088" stroke-width="5"/><polygon points="1649,378 1640,400 1655,402" fill="#000099"/><polygon points="87.5,1495 207,1524 209.7,1608.5 47,1587.5" fill="#c9c9c9"/><polygon points="47,1587.5 209.7,1608.5 185,1662 47,1662" fill="#cdcdcd"/><path d="M209.7,1608.5 L209.5,1534" stroke="#8080cc" stroke-width="2.5"/><polygon points="209,1520 203,1532 215,1532" fill="#8080cc"/><path d="M209.7,1608.5 L92,1578" stroke="#d9b3b3" stroke-width="2.5"/><polygon points="82.5,1576 95,1572 92,1584" fill="#d9b3b3"/><path d="M209.7,1608.5 L185,1662" stroke="#66bb66" stroke-width="2.5"/><text x="201" y="1510" font-family="Liberation Sans" font-size="17" fill="#8080cc">Z</text><text x="44" y="1576" font-family="Liberation Sans" font-size="17" fill="#e0c0c0">X</text><text transform="matrix(-0.97 -0.24 0.24 -0.97 148 1555)" font-family="Liberation Sans" font-size="21" fill="#333">Top</text><text transform="matrix(0.96 0.26 -0.05 1 83 1643)" font-family="Liberation Sans" font-size="21" fill="#333">Back</text><circle cx="310" cy="1665" r="36" fill="#f7f7f7"/><g fill="none" stroke="#555" stroke-width="2.6" transform="translate(310 1650)"><path d="M-19 2 v-7 q0 -5 5 -5 h6 M8 -10 h6 q5 0 5 5 v7"/><path d="M0 -4 L12 2 L0 8 L-12 2 Z M-12 2 V12 M12 2 V12"/></g></svg>
</div>
<div class="r" style="left:848.0px;top:116.0px;width:40.0px;height:40.0px;background:#f7f7f7"></div>
<svg class="r" style="left:856.0px;top:124.0px" width="24.0" height="24.0" viewBox="0 0 24 24"><path d="M8 6 L3 12 L8 18 M16 6 L21 12 L16 18 M12 3 V21" fill="none" stroke="#262e30" stroke-width="1.8"/></svg>
<div class="r" style="left:960.0px;top:116.0px;width:1867.5px;height:100.0px;background:#f8f8f8"></div>
<svg class="r" style="left:960px;top:116px" width="1868" height="100" viewBox="960 116 1868 100"><g fill="none" stroke="#262e30" stroke-width="2.3" stroke-linejoin="round"><rect x="971.3" y="152.3" width="41" height="41.5"/><path d="M971.3 152.3 L991.5 132.3 H1032 L1012.3 152.3 M1032 132.3 V165 M1012.3 193.8 L1020 186"/><circle cx="1032.3" cy="178.6" r="14.2" fill="#f8f8f8"/><path d="M1032.3 168.5V188.7M1022.2 178.6H1042.4" stroke-width="2.2"/></g><g fill="none" stroke="#262e30" stroke-linejoin="round"><path d="M1064.0 134.8V191.2M1064 134.8H1121M1075.4 134.8V191.2M1064 146.1H1121M1086.8 134.8V191.2M1064 157.4H1121M1098.2 134.8V191.2M1064 168.6H1121M1109.6 134.8V191.2M1064 179.9H1121M1121.0 134.8V191.2M1064 191.2H1121" stroke-width="2.4"/><circle cx="1116" cy="182.5" r="14.2" fill="#f8f8f8" stroke-width="2.6"/><path d="M1116 172.4V192.6M1105.9 182.5H1126.1" stroke-width="2.2"/></g><g fill="none" stroke="#262e30" stroke-width="2.3" stroke-linejoin="round"><polygon points="1183.5,134.6 1220,145.6 1209,181.5 1173.7,170"/><path d="M1171 161 Q1162 164 1159 172"/><polygon points="1153.5,169 1169.4,174 1157.6,185"/><rect x="1158.5" y="190.3" width="59.5" height="6.3" rx="3.1"/></g><text x="1151" y="154" font-family="Liberation Sans" font-weight="bold" font-size="10.5" fill="#262e30" textLength="26" lengthAdjust="spacingAndGlyphs">AUTO</text><g fill="none" stroke="#262e30" stroke-width="2.3"><rect x="1241.5" y="134.5" width="62.5" height="62.5"/><rect x="1248.5" y="140.3" width="49.5" height="18.5"/><rect x="1248.5" y="163.7" width="15" height="26.8"/><rect x="1268.7" y="163.7" width="29.3" height="10.7"/><rect x="1268.7" y="179.7" width="29.3" height="10.8"/></g><g fill="none" stroke="#c5c5c5" stroke-width="2.2"><rect x="1334" y="148.5" width="55" height="4.8" rx="1.5"/><rect x="1334" y="158" width="55" height="6" rx="1.5"/><rect x="1334" y="169.3" width="55" height="7.7" rx="1.5"/><rect x="1334" y="182.8" width="55" height="9.7" rx="1.5"/></g><rect x="1333.5" y="141" width="56" height="3.2" rx="1.5" fill="#c5c5c5"/><rect x="1425" y="135" width="2" height="61.6" fill="#555"/><g fill="none" stroke="#c5c5c5" stroke-width="2.3" stroke-linejoin="round"><path d="M1497 132 L1508.7 143.5 H1500.8 V152 H1493.2 V143.5 H1485.3 Z"/><path d="M1497 199.5 L1508.7 188 H1500.8 V179.5 H1493.2 V188 H1485.3 Z"/><path d="M1463 166 L1475 154.5 V162.2 H1483.6 V169.8 H1475 V177.6 Z"/><path d="M1531 166 L1519 154.5 V162.2 H1510.4 V169.8 H1519 V177.6 Z"/><rect x="1492.8" y="161.6" width="8.4" height="8.4" rx="1"/></g><g fill="none" stroke="#c5c5c5" stroke-width="2.3" stroke-linejoin="round"><polygon points="1584,151.6 1607.7,175.3 1584,199 1560.3,175.3"/><path d="M1555.4 176.7 A27.5 27.5 0 0 1 1603 146.3"/><polygon points="1596.5,153 1610.8,138.7 1617.4,158.6"/></g><g fill="none" stroke="#c5c5c5" stroke-width="2.3"><rect x="1641.5" y="134.5" width="62.3" height="62" stroke-dasharray="5 5"/><rect x="1641.5" y="162.4" width="34.2" height="34.2"/><path d="M1679.5 159.6 L1694.7 144.4 M1682 144.4 H1694.7 V157.7" stroke-width="2.6"/></g><g fill="none" stroke="#c5c5c5" stroke-width="2.3" stroke-linejoin="round"><polygon points="1758,135.5 1795,143.8 1786.3,180.5 1750.3,172"/><path d="M1747.4 161 Q1740 164 1737 171"/><polygon points="1728.4,168.7 1745.5,172.9 1733,185.2"/><rect x="1734" y="190" width="59" height="6.6" rx="3.3"/></g><g fill="none" stroke="#c5c5c5" stroke-width="2.3"><rect x="1820.3" y="134.3" width="57.2" height="26.8"/><rect x="1820.3" y="169.2" width="57.2" height="27"/><path d="M1820 165.3H1878" stroke-dasharray="3 3.2"/></g><g fill="none" stroke="#c5c5c5" stroke-width="2.3"><rect x="1904.3" y="151.3" width="46.3" height="46.2"/><rect x="1925.3" y="134.3" width="46.5" height="46.2"/><path d="M1927 164 L1939 152 M1927 174 L1949 152 M1935 180 L1949 166" stroke-width="1.4"/></g><g fill="none" stroke="#c5c5c5" stroke-width="2.3" stroke-linejoin="round"><polygon points="2024,136.4 2051.7,149.2 2046,160.5 2018.5,147.3"/><rect x="2014.7" y="162.4" width="31.3" height="12.4" stroke-dasharray="2 2.5" stroke-width="1.8"/><rect x="2001" y="176.3" width="59" height="19.3"/><path d="M2013.8 149.2 Q2006 151 2003 158.6"/><polygon points="1995.7,156.7 2011.9,160.5 2000.5,172"/></g><g fill="none" stroke="#c5c5c5" stroke-width="2.3" stroke-linejoin="round"><polygon points="2110.5,135.5 2138.4,163.4 2107,195.7 2079.2,167.2"/><path d="M2081 164 H2138"/><path d="M2139 171 C2132 182 2129.5 188 2129.5 191.5 A9.5 9.5 0 0 0 2148.6 191.5 C2148.6 188 2146 182 2139 171Z"/></g><path d="M2089 134 L2110 155" stroke="#c5c5c5" stroke-width="5.5" stroke-linecap="round"/><g fill="#fafafa" stroke="#262e30" stroke-width="2.4" stroke-linejoin="round"><path d="M2172.5 135 H2219 Q2220 135 2220 136 V143.6 Q2220 144.6 2219 144.6 H2201.8 V195 Q2201.8 196 2200.8 196 H2189.4 Q2188.4 196 2188.4 195 V144.6 H2172.5 Q2171.5 144.6 2171.5 143.6 V136 Q2171.5 135 2172.5 135Z"/></g><text x="2209" y="196" font-family="Liberation Sans" font-size="35" fill="#fafafa" stroke="#262e30" stroke-width="2.3" textLength="23"  lengthAdjust="spacingAndGlyphs">a</text><g fill="none" stroke="#c5c5c5" stroke-width="2.3" stroke-linejoin="round"><path d="M2259.5 134.5 H2320.5 V196 H2293 V160.6 H2259.5 Z"/><rect x="2263.3" y="160.6" width="22" height="35.4"/><path d="M2264 170 L2273 161 M2264 181 L2284 161 M2264 192 L2285 171 M2272 195 L2285 182" stroke-width="1.5"/></g><g fill="none" stroke="#c5c5c5" stroke-width="2.3" stroke-linejoin="round"><rect x="2347.3" y="154.5" width="41.5" height="41.5"/><path d="M2347.3 154.5 L2368.7 134.3 H2408.8 L2388.8 154.5 M2408.8 134.3 V176 L2388.8 196"/><path d="M2356 159 Q2362 178 2363 195" stroke-dasharray="1.6 3" stroke-width="1.8"/></g><g fill="none" stroke="#c5c5c5" stroke-width="2.3"><rect x="2445.9" y="146.7" width="38.6" height="38.6" fill="#f8f8f8"/><g fill="#f8f8f8"><circle cx="2444.4" cy="145.2" r="9.3"/><circle cx="2485.4" cy="145.2" r="9.3"/><circle cx="2444.4" cy="186.8" r="9.3"/><circle cx="2485.4" cy="186.8" r="9.3"/></g><rect x="2445.9" y="146.7" width="38.6" height="38.6" fill="#f8f8f8"/><path d="M2438 151 L2450 139 M2479 151 L2491 139 M2438 193 L2450 181 M2479 193 L2491 181" stroke-width="1.5"/></g><g fill="none" stroke="#c5c5c5" stroke-width="2.3" stroke-linejoin="round"><rect x="2523.7" y="154.4" width="42" height="41.6"/><path d="M2523.7 154.4 L2544.7 134.3 H2586.4 L2565.7 154.4 M2586.4 134.3 V176 L2565.7 196"/><path d="M2526 162 q3.3 -3 6.6 0 t6.6 0 t6.6 0 t6.6 0 t6.6 0 M2526 171 q3.3 -3 6.6 0 t6.6 0 t6.6 0 t6.6 0 t6.6 0 M2526 180 q3.3 -3 6.6 0 t6.6 0 t6.6 0 t6.6 0 t6.6 0 M2526 189 q3.3 -3 6.6 0 t6.6 0 t6.6 0 t6.6 0 t6.6 0 M2568 165 q2.5 -6 5 -5 t5 -5 t5 -5 t5 -5 M2568 176 q2.5 -6 5 -5 t5 -5 t5 -5 t5 -5 M2568 187 q2.5 -6 5 -5 t5 -5 t5 -5 t5 -5 " stroke-width="1.5"/></g><g fill="#262e30"><circle cx="2608" cy="166" r="2.5"/><circle cx="2622.5" cy="166" r="2.5"/><circle cx="2637" cy="166" r="2.5"/></g><path d="M2651.3 161.2 L2661.5 171.4 L2671.4 161.2" fill="none" stroke="#262e30" stroke-width="2.6"/><rect x="2704.5" y="135" width="2" height="61.7" fill="#444"/><g fill="none" stroke="#262e30" stroke-width="2.5" stroke-linejoin="round"><path d="M2746 146.7 H2770.8 V156 A4.5 4.5 0 0 0 2770.8 165 V170.8 H2761 A4.5 4.5 0 0 1 2752 170.8 H2746 Z"/><path d="M2746 170.8 H2752 A4.5 4.5 0 0 0 2761 170.8 H2770.8 V176.5 A4.5 4.5 0 0 1 2770.8 185.5 V196 H2746 Z"/><path d="M2770.8 176.5 A4.5 4.5 0 0 1 2770.8 185.5 V196 H2796.3 V170.8 H2787 A4.5 4.5 0 0 0 2778 170.8 H2770.8 Z"/><path d="M2791 131 L2809 149 L2791 166.5 L2784.5 160 A4.5 4.5 0 0 0 2778 153.5 L2773 148.5 L2779 142.5 A4.5 4.5 0 0 1 2785.5 136.5 Z"/></g></svg>
</body></html>
